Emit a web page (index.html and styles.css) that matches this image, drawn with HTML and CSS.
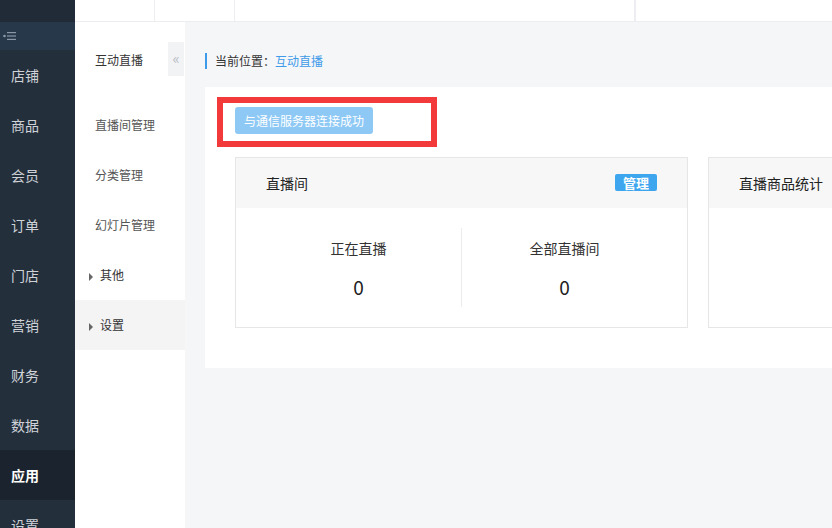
FILE: index.html
```html
<!DOCTYPE html>
<html>
<head>
    <title>互动直播</title>
    <link rel="stylesheet" href="styles.css">
</head>
<body>
    <div class="layout">
        <aside class="nav">
            <div class="nav-top"></div>
            <div class="nav-toggle">
                <svg width="14" height="10" viewBox="0 0 14 10">
                    <circle cx="1.5" cy="5" r="1.3" fill="#8a97a6"/>
                    <rect x="4" y="1" width="9" height="1.2" fill="#8a97a6"/>
                    <rect x="4" y="4.4" width="9" height="1.2" fill="#8a97a6"/>
                    <rect x="4" y="7.8" width="9" height="1.2" fill="#8a97a6"/>
                </svg>
            </div>
            <ul class="nav-list">
                <li>店铺</li>
                <li>商品</li>
                <li>会员</li>
                <li>订单</li>
                <li>门店</li>
                <li>营销</li>
                <li>财务</li>
                <li>数据</li>
                <li class="active">应用</li>
                <li>设置</li>
            </ul>
        </aside>
        <div class="right">
            <header class="topbar">
                <div class="topbar-cell w80"></div>
                <div class="topbar-cell w80"></div>
                <div class="topbar-cell w400"></div>
                <div class="topbar-cell"></div>
            </header>
            <div class="content">
                <aside class="subnav">
                    <div class="subnav-title">互动直播</div>
                    <div class="subnav-handle">&laquo;</div>
                    <ul class="subnav-list">
                        <li>直播间管理</li>
                        <li>分类管理</li>
                        <li>幻灯片管理</li>
                        <li class="group"><span class="caret"></span>其他</li>
                        <li class="group current"><span class="caret"></span>设置</li>
                    </ul>
                </aside>
                <main class="main">
                    <div class="breadcrumb">当前位置：<span class="crumb-link">互动直播</span></div>
                    <div class="panel">
                        <div class="highlight">
                            <button class="status-btn">与通信服务器连接成功</button>
                        </div>
                        <div class="cards">
                            <div class="card">
                                <div class="card-head">
                                    <span>直播间</span>
                                    <span class="badge">管理</span>
                                </div>
                                <div class="card-body">
                                    <div class="stat">
                                        <div class="stat-label">正在直播</div>
                                        <div class="stat-num">0</div>
                                    </div>
                                    <div class="stat">
                                        <div class="stat-label">全部直播间</div>
                                        <div class="stat-num">0</div>
                                    </div>
                                </div>
                            </div>
                            <div class="card">
                                <div class="card-head">
                                    <span>直播商品统计</span>
                                </div>
                                <div class="card-body"></div>
                            </div>
                        </div>
                    </div>
                </main>
            </div>
        </div>
    </div>
</body>
</html>
```

FILE: styles.css
```css
html, body {
    margin: 0;
    padding: 0;
    height: 100%;
    overflow: hidden;
}
body {
    font-family: "Noto Sans CJK SC", "Liberation Sans", sans-serif;
    color: #333;
    background-color: #f5f6f8;
}
ul {
    list-style: none;
    margin: 0;
    padding: 0;
}
.layout {
    display: flex;
    height: 100vh;
}
.nav {
    width: 75px;
    flex: none;
    background-color: #242f3c;
    overflow: hidden;
}
.nav-top {
    height: 22px;
    background-color: #212b37;
}
.nav-toggle {
    height: 28px;
    background-color: #27384b;
    display: flex;
    align-items: center;
    padding-left: 3px;
}
.nav-list li {
    height: 50px;
    line-height: 50px;
    padding-left: 11px;
    font-size: 14px;
    color: #cfd3d8;
}
.nav-list li.active {
    background-color: #1b242e;
    color: #fff;
    font-weight: bold;
}
.right {
    flex: 1;
    display: flex;
    flex-direction: column;
    min-width: 0;
}
.topbar {
    height: 21px;
    flex: none;
    display: flex;
    background-color: #fff;
    border-bottom: 1px solid #ebedf0;
}
.topbar-cell {
    border-right: 1px solid #eceef1;
}
.topbar-cell.w80 {
    width: 79px;
}
.topbar-cell.w400 {
    width: 399px;
}
.content {
    flex: 1;
    display: flex;
}
.subnav {
    width: 110px;
    flex: none;
    background-color: #fff;
    position: relative;
}
.subnav-title {
    height: 78px;
    box-sizing: border-box;
    padding: 30px 0 0 20px;
    line-height: 16px;
    font-size: 12px;
    color: #333;
}
.subnav-handle {
    position: absolute;
    top: 20px;
    right: 1px;
    width: 16px;
    height: 34px;
    line-height: 32px;
    text-align: center;
    background-color: #f2f3f5;
    color: #b9bec5;
    font-size: 15px;
}
.subnav-list li {
    height: 50px;
    line-height: 50px;
    padding-left: 20px;
    font-size: 12px;
    color: #555;
}
.subnav-list li.group {
    padding-left: 14px;
    color: #333;
}
.subnav-list li.current {
    background-color: #f4f4f5;
}
.caret {
    display: inline-block;
    width: 0;
    height: 0;
    border-top: 4px solid transparent;
    border-bottom: 4px solid transparent;
    border-left: 4px solid #666;
    margin-right: 7px;
    vertical-align: -1px;
}
.main {
    flex: 1;
    min-width: 0;
    padding-left: 20px;
}
.breadcrumb {
    margin-top: 31px;
    height: 16px;
    line-height: 16px;
    border-left: 2px solid #3d9be9;
    padding-left: 8px;
    font-size: 12px;
    color: #333;
}
.crumb-link {
    color: #3d9be9;
}
.panel {
    margin-top: 18px;
    background-color: #fff;
    padding: 10px 0 40px;
}
.highlight {
    width: 220px;
    height: 50px;
    box-sizing: border-box;
    margin-left: 12px;
    border: 6px solid #f23a3a;
    padding: 4px 0 0 12px;
}
.status-btn {
    width: 138px;
    height: 27px;
    padding: 0;
    border: none;
    border-radius: 3px;
    background-color: #8ec9f6;
    color: #fff;
    font-family: inherit;
    font-size: 12px;
}
.cards {
    display: flex;
    gap: 20px;
    margin: 10px 0 0 30px;
}
.card {
    width: 453px;
    height: 171px;
    flex: none;
    box-sizing: border-box;
    border: 1px solid #e6e6e6;
}
.card-head {
    height: 50px;
    background-color: #f7f7f7;
    display: flex;
    align-items: center;
    justify-content: space-between;
    padding: 0 30px;
    font-size: 14px;
    color: #222;
}
.badge {
    width: 42px;
    height: 17px;
    line-height: 17px;
    text-align: center;
    background-color: #3ea6ee;
    color: #fff;
    font-weight: bold;
    font-size: 13px;
    border-radius: 2px;
    margin-top: -2px;
}
.card-body {
    display: flex;
    padding: 20px 20px 0;
}
.stat {
    flex: 1;
    height: 79px;
    text-align: center;
    padding-top: 9px;
    box-sizing: border-box;
}
.stat + .stat {
    border-left: 1px solid #ececec;
}
.stat-label {
    font-size: 14px;
    line-height: 22px;
    color: #333;
}
.stat-num {
    margin-top: 16px;
    font-size: 19px;
    line-height: 24px;
    color: #222;
}
```
